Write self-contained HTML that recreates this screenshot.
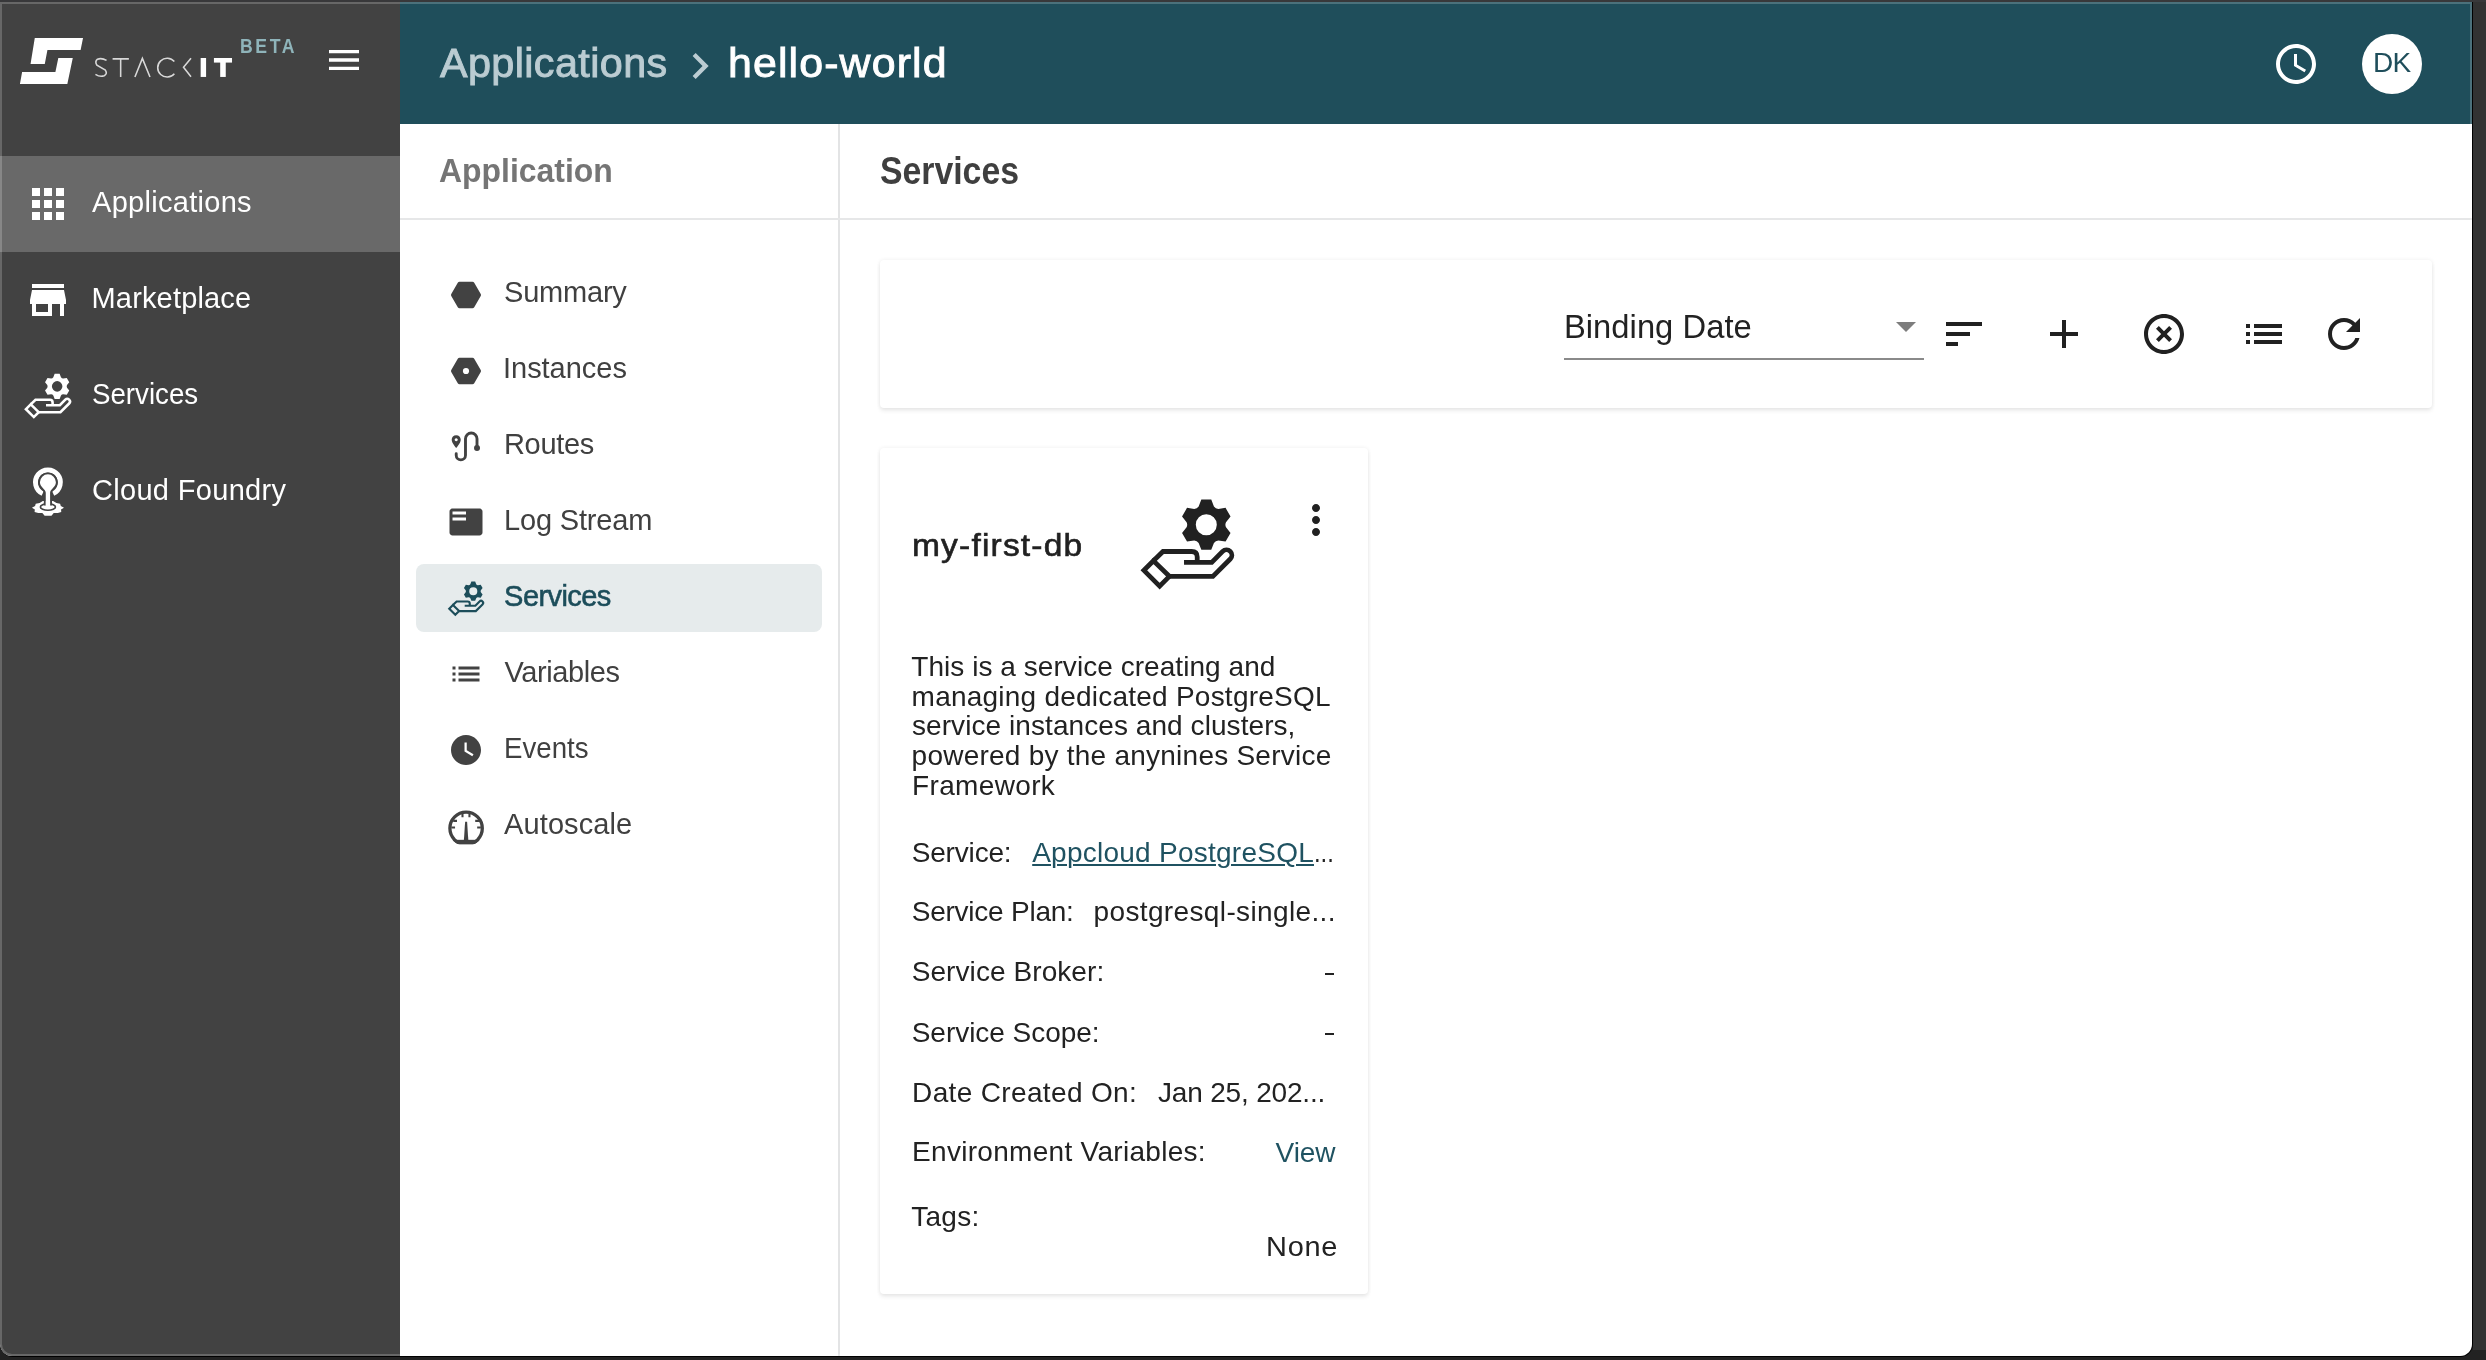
<!DOCTYPE html>
<html>
<head>
<meta charset="utf-8">
<title>hello-world - Services</title>
<style>
*{box-sizing:border-box;margin:0;padding:0}
html,body{width:2486px;height:1360px;overflow:hidden;background:#222}
body{font-family:"Liberation Sans",sans-serif;position:relative;color:#212121}
.abs,.t,svg.i{position:absolute}
.t{white-space:nowrap;line-height:1;transform-origin:0 0}
#rstrip{position:absolute;left:2473px;top:0;width:13px;height:1350px;background:#323232}
#win{position:absolute;left:0;top:0;width:2473px;height:1357px;background:#000;border-radius:0 0 13px 13px;overflow:hidden}
#chrome-top{position:absolute;left:0;top:0;width:2486px;height:2px;background:#38383a}
#app{position:absolute;left:0;top:2px;width:2472px;height:1354px;background:#fff;border-radius:0 0 12px 12px;overflow:hidden}
#side{left:0;top:0;width:400px;height:1354px;background:#424242}
#side .act{left:0;top:154px;width:400px;height:96px;background:#696969}
#hdr{left:400px;top:0;width:2072px;height:122px;background:#1f4e5b}
#nav{left:400px;top:122px;width:440px;height:1232px;background:#fff;border-right:2px solid #e3e4e5}
.hline{left:400px;top:216px;width:2072px;height:2px;background:#e6e7e8}
#nav .sel{left:16px;top:440px;width:406px;height:68px;background:#e6ebec;border-radius:8px}
.card{background:#fff;border-radius:4px;box-shadow:0 3px 4px rgba(0,0,0,.07),0 0 4px rgba(0,0,0,.07)}
</style>
</head>
<body>
<svg width="0" height="0" style="position:absolute">
<defs>
<symbol id="svc" viewBox="0 0 1465 1360">
<path d="M823.0,276.0 L851.0,205.1 L955.0,205.1 L983.0,276.0 Q999.7,300.5 1029.3,302.7 L1104.7,291.5 L1156.7,381.6 L1109.3,441.3 Q1096.4,468.0 1109.3,494.7 L1156.7,554.4 L1104.7,644.5 L1029.3,633.3 Q999.7,635.5 983.0,660.0 L955.0,730.9 L851.0,730.9 L823.0,660.0 Q806.3,635.5 776.7,633.3 L701.3,644.5 L649.3,554.4 L696.7,494.7 Q709.6,468.0 696.7,441.3 L649.3,381.6 L701.3,291.5 L776.7,302.7 Q806.3,300.5 823.0,276.0 Z M793.0,468.0 a110,110 0 1,0 220,0 a110,110 0 1,0 -220,0 Z" fill="currentColor" fill-rule="evenodd"/>
<g fill="none" stroke="currentColor" stroke-linejoin="miter">
<path d="M350,845 L250,945 L415,1110 L517,1008 Z"/>
<path d="M350,845 L450,748 H750 Q808,748 808,806 V850"/>
<path d="M670,862 H960 L1074,747 A56,56 0 0 1 1154,827 L972,1008 H517"/>
</g>
</symbol>
</defs>
</svg>

<div id="win">
<div id="app">

<!-- ============ SIDEBAR ============ -->
<div id="side" class="abs">
  <div class="act abs"></div>
  <!-- logo -->
  <svg class="i" style="left:10px;top:18px" width="300" height="90" viewBox="0 0 2486 746">
    <g fill="#fff">
      <path d="M205,150 H605 L585,248 H310 L288,365 H170 Z"/>
      <path d="M520,315 H400 L376,430 H100 L82,530 H475 Z"/>
    </g>
    <g fill="none" stroke="#d8d8d8" stroke-width="13">
      <path d="M800,335 Q760,312 725,325 Q700,345 720,375 L790,415 Q810,445 780,462 Q745,475 708,450"/>
      <path d="M850,322 H985 M917,322 V472"/>
      <path d="M1035,472 L1097,318 L1160,472"/>
      <path d="M1362,345 A78,78 0 1 0 1362,445"/>
      <path d="M1500,318 L1438,392 L1500,470"/>
    </g>
    <g fill="#fff">
      <rect x="1580" y="315" width="45" height="157"/>
      <rect x="1690" y="315" width="150" height="38"/>
      <rect x="1742" y="315" width="46" height="157"/>
    </g>
  </svg>
  <!-- hamburger -->
  <svg class="i" style="left:324px;top:38px" width="40" height="40" viewBox="0 0 24 24"><path fill="#fff" d="M3 18h18v-2H3v2zm0-5h18v-2H3v2zm0-7v2h18V6H3z"/></svg>

  <!-- Applications -->
  <svg class="i" style="left:24px;top:178px" width="48" height="48" viewBox="0 0 24 24"><path fill="#fff" d="M4 8h4V4H4v4zm6 12h4v-4h-4v4zm-6 0h4v-4H4v4zm0-6h4v-4H4v4zm6 0h4v-4h-4v4zm6-10v4h4V4h-4zm-6 4h4V4h-4v4zm6 6h4v-4h-4v4zm0 6h4v-4h-4v4z"/></svg>
  <!-- Marketplace -->
  <svg class="i" style="left:24px;top:274px" width="48" height="48" viewBox="0 0 24 24"><path fill="#fff" d="M20 4H4v2h16V4zm1 10v-2l-1-5H4l-1 5v2h1v6h10v-6h4v6h2v-6h1zm-9 4H6v-4h6v4z"/></svg>
  <!-- Services -->
  <svg class="i" style="left:14px;top:362px;color:#fff;stroke-width:54" width="70" height="65"><use href="#svc" width="70" height="65"/></svg>
  <!-- Cloud Foundry -->
  <svg class="i" style="left:20px;top:458px" width="56" height="62" viewBox="0 0 1228 1360">
    <path d="M497,737 A272,272 0 1 1 727,737" fill="none" stroke="#fff" stroke-width="110"/>
    <path id="cfbase" fill="#fff" d="M262,1045 L330,1010 L345,960 L430,945 L500,900 H725 L800,945 L880,960 L895,1010 L965,1045 L900,1085 L905,1140 L830,1165 L740,1160 L690,1225 H540 L490,1160 L400,1165 L320,1140 L325,1085 Z"/>
    <ellipse cx="612" cy="1030" rx="165" ry="72" fill="#fff" stroke="#424242" stroke-width="36"/>
    <path d="M565,1000 V720 C565,640 437,600 437,490 A175,175 0 1 1 787,490 C787,600 660,640 660,720 V1000" fill="#fff" stroke="#424242" stroke-width="84" paint-order="stroke"/>
    <rect x="566" y="900" width="93" height="150" fill="#fff"/>
  </svg>
</div>

<!-- ============ HEADER ============ -->
<div id="hdr" class="abs">
  <svg class="i" style="left:274px;top:38px" width="52" height="52" viewBox="0 0 24 24"><path fill="#bbccd2" d="M10 6L8.59 7.41 13.17 12l-4.58 4.59L10 18l6-6z"/></svg>
  <svg class="i" style="left:1872px;top:38px" width="48" height="48" viewBox="0 0 24 24"><path fill="#fff" d="M11.99 2C6.47 2 2 6.48 2 12s4.47 10 9.99 10C17.52 22 22 17.52 22 12S17.52 2 11.99 2zM12 20c-4.42 0-8-3.580-8-8s3.580-8 8-8 8 3.580 8 8-3.580 8-8 8zm.5-13H11v6l5.250 3.150.75-1.230-4.500-2.670z"/></svg>
  <div class="abs" style="left:1962px;top:32px;width:60px;height:60px;border-radius:50%;background:#fff"></div>
</div>

<!-- ============ SECONDARY NAV ============ -->
<div id="nav" class="abs">
  <div class="sel abs"></div>
  <!-- icons -->
  <svg class="i" style="left:48px;top:153px" width="36" height="36" viewBox="0 0 36 36"><path fill="#424242" stroke="#424242" stroke-width="4" stroke-linejoin="round" d="M5,18 L11.500,6.700 H24.500 L31,18 L24.500,29.300 H11.500 Z"/></svg>
  <svg class="i" style="left:48px;top:229px" width="36" height="36" viewBox="0 0 36 36"><path fill="#424242" stroke="#424242" stroke-width="4" stroke-linejoin="round" d="M5,18 L11.500,6.700 H24.500 L31,18 L24.500,29.300 H11.500 Z"/><circle cx="18" cy="18" r="3.100" fill="#fff"/></svg>
  <svg class="i" style="left:36px;top:286px" width="60" height="70" viewBox="0 0 1166 1360">
    <path fill="#424242" fill-rule="evenodd" d="M393,490 C340,490 305,530 305,578 C305,640 393,738 393,738 C393,738 481,640 481,578 C481,530 446,490 393,490 Z M393,548 a30,30 0 1,0 .1,0 Z"/>
    <path fill="none" stroke="#424242" stroke-width="56" stroke-linecap="round" d="M393,848 V880 A90,90 0 0 0 573,880 V560 A112,112 0 0 1 797,560 V720"/>
    <circle cx="797" cy="740" r="58" fill="#424242"/>
  </svg>
  <svg class="i" style="left:48px;top:380px" width="36" height="36" viewBox="0 0 24 24"><path fill="#424242" d="M21 3H3c-1.100 0-2 .9-2 2v14c0 1.100.9 2 2 2h18c1.100 0 2-.9 2-2V5c0-1.100-.9-2-2-2zm-9 8H3V9h9v2zm0-4H3V5h9v2z"/></svg>
  <svg class="i" style="left:40px;top:450px;color:#1c4d5a;stroke-width:58" width="54" height="50"><use href="#svc" width="54" height="50"/></svg>
  <svg class="i" style="left:48px;top:532px" width="36" height="36" viewBox="0 0 24 24"><path fill="#424242" d="M3 13h2v-2H3v2zm0 4h2v-2H3v2zm0-8h2V7H3v2zm4 4h14v-2H7v2zm0 4h14v-2H7v2zM7 7v2h14V7H7z"/></svg>
  <svg class="i" style="left:48px;top:608px" width="36" height="36" viewBox="0 0 24 24"><path fill="#424242" d="M12 2C6.500 2 2 6.500 2 12s4.500 10 10 10 10-4.500 10-10S17.500 2 12 2zm4.200 14.200L11 13V7h1.500v5.200l4.500 2.700-.8 1.300z"/></svg>
  <svg class="i" style="left:36px;top:666px" width="60" height="70" viewBox="0 0 1166 1360">
    <defs><clipPath id="gc1"><rect x="0" y="0" width="1166" height="1052"/></clipPath><clipPath id="gc2"><circle cx="585" cy="745" r="346"/></clipPath></defs>
    <g clip-path="url(#gc1)"><circle cx="585" cy="745" r="315" fill="none" stroke="#424242" stroke-width="64"/></g>
    <g clip-path="url(#gc2)"><rect x="200" y="968" width="800" height="84" fill="#424242"/></g>
    <path fill="#424242" d="M566,618 H604 L628,975 H542 Z"/>
    <g stroke="#424242" stroke-width="40" fill="none">
      <path d="M298,730 H370 M800,730 H872 M335,600 H408 M762,600 H835"/>
      <path d="M515,465 V528 M650,465 V528"/>
    </g>
  </svg>
  <!-- labels -->
</div>

<!-- ============ MAIN ============ -->
<div class="hline abs"></div>

<!-- toolbar card -->
<div class="card abs" style="left:880px;top:258px;width:1552px;height:148px"></div>
<div class="abs" style="left:1564px;top:356px;width:360px;height:2px;background:#8a8a8a"></div>
<svg class="i" style="left:1882px;top:300px" width="48" height="48" viewBox="0 0 24 24"><path fill="#7d7d7d" d="M7 10l5 5 5-5z"/></svg>
<svg class="i" style="left:1940px;top:308px" width="48" height="48" viewBox="0 0 24 24"><path fill="#212121" d="M3 18h6v-2H3v2zM3 6v2h18V6H3zm0 7h12v-2H3v2z"/></svg>
<svg class="i" style="left:2040px;top:308px" width="48" height="48" viewBox="0 0 24 24"><path fill="#212121" d="M19 13h-6v6h-2v-6H5v-2h6V5h2v6h6v2z"/></svg>
<svg class="i" style="left:2140px;top:308px" width="48" height="48" viewBox="0 0 24 24"><path fill="#212121" d="M14.590 8L12 10.590 9.410 8 8 9.410 10.590 12 8 14.590 9.410 16 12 13.410 14.590 16 16 14.590 13.410 12 16 9.410 14.590 8zM12 2C6.470 2 2 6.470 2 12s4.470 10 10 10 10-4.470 10-10S17.530 2 12 2zm0 18c-4.410 0-8-3.590-8-8s3.590-8 8-8 8 3.590 8 8-3.590 8-8 8z"/></svg>
<svg class="i" style="left:2240px;top:308px" width="48" height="48" viewBox="0 0 24 24"><path fill="#212121" d="M3 13h2v-2H3v2zm0 4h2v-2H3v2zm0-8h2V7H3v2zm4 4h14v-2H7v2zm0 4h14v-2H7v2zM7 7v2h14V7H7z"/></svg>
<svg class="i" style="left:2320px;top:308px" width="48" height="48" viewBox="0 0 24 24"><path fill="#212121" d="M17.650 6.350C16.200 4.900 14.210 4 12 4c-4.420 0-7.990 3.580-7.990 8s3.570 8 7.990 8c3.730 0 6.840-2.550 7.730-6h-2.080c-.82 2.330-3.040 4-5.650 4-3.310 0-6-2.690-6-6s2.690-6 6-6c1.660 0 3.140.69 4.220 1.780L13 11h7V4l-2.350 2.350z"/></svg>

<!-- service card -->
<div class="card abs" style="left:880px;top:446px;width:488px;height:846px"></div>
<div class="c">
  <svg class="i" style="left:1120px;top:478px;color:#212121;stroke-width:50" width="140" height="130"><use href="#svc" width="140" height="130"/></svg>
  <svg class="i" style="left:1292px;top:494px" width="48" height="48" viewBox="0 0 24 24"><path fill="#212121" d="M12 8c1.100 0 2-.9 2-2s-.9-2-2-2-2 .9-2 2 .9 2 2 2zm0 2c-1.100 0-2 .9-2 2s.9 2 2 2 2-.9 2-2-.9-2-2-2zm0 6c-1.100 0-2 .9-2 2s.9 2 2 2 2-.9 2-2-.9-2-2-2z"/></svg>
</div>

<div class="abs" style="left:1325px;top:971px;width:9px;height:2px;background:#222"></div>
<div class="abs" style="left:1325px;top:1031px;width:9px;height:2px;background:#222"></div>
<div id="txt" style="position:absolute;left:0;top:0;width:2472px;height:1354px;will-change:transform">
<!--TEXTS-->
<div class="t" id="s1" style="left:92.1px;top:186px;font-size:29px;color:#fff;letter-spacing:0.28px">Applications</div>
<div class="t" id="s2" style="left:91.5px;top:282px;font-size:29px;color:#fff;letter-spacing:0.17px">Marketplace</div>
<div class="t" id="s3" style="left:91.9px;top:378px;font-size:29px;color:#fff;letter-spacing:0.00px;transform:scaleX(0.9550)">Services</div>
<div class="t" id="s4" style="left:91.9px;top:474px;font-size:29px;color:#fff;letter-spacing:0.33px">Cloud Foundry</div>
<div class="t" id="beta" style="left:239.7px;top:33px;font-size:21px;color:#8fb4ba;letter-spacing:3.07px;transform:scaleX(0.8400);font-weight:bold">BETA</div>
<div class="t" id="h1" style="left:440.0px;top:41px;font-size:40.5px;color:#bbccd2;letter-spacing:0.39px;transform:scaleX(1.0202);-webkit-text-stroke:.9px #bbccd2">Applications</div>
<div class="t" id="h2" style="left:727.5px;top:41px;font-size:40.5px;color:#fff;letter-spacing:1.06px;transform:scaleX(1.0586);-webkit-text-stroke:.9px #fff">hello-world</div>
<div class="t" id="dk" style="left:2373.0px;top:47px;font-size:28px;color:#1f4e5b;letter-spacing:-0.60px">DK</div>
<div class="t" id="n0" style="left:438.8px;top:151px;font-size:34px;color:#757575;letter-spacing:0.00px;transform:scaleX(0.9385);font-weight:bold">Application</div>
<div class="t" id="n1" style="left:504.1px;top:276px;font-size:29px;color:#404040;letter-spacing:-0.22px">Summary</div>
<div class="t" id="n2" style="left:503.0px;top:352px;font-size:29px;color:#404040;letter-spacing:-0.03px">Instances</div>
<div class="t" id="n3" style="left:504.0px;top:428px;font-size:29px;color:#404040;letter-spacing:-0.34px">Routes</div>
<div class="t" id="n4" style="left:504.0px;top:504px;font-size:29px;color:#404040;letter-spacing:-0.18px">Log Stream</div>
<div class="t" id="n5" style="left:504.1px;top:580px;font-size:29px;color:#1c4d5a;letter-spacing:-0.56px;-webkit-text-stroke:.6px #1c4d5a">Services</div>
<div class="t" id="n6" style="left:504.4px;top:656px;font-size:29px;color:#404040;letter-spacing:-0.39px">Variables</div>
<div class="t" id="n7" style="left:504.1px;top:732px;font-size:29px;color:#404040;letter-spacing:0.00px;transform:scaleX(0.9535)">Events</div>
<div class="t" id="n8" style="left:504.1px;top:808px;font-size:29px;color:#404040;letter-spacing:0.09px">Autoscale</div>
<div class="t" id="m0" style="left:880.0px;top:149px;font-size:39px;color:#3f3f3f;letter-spacing:0.00px;transform:scaleX(0.8658);font-weight:bold">Services</div>
<div class="t" id="bd" style="left:1563.9px;top:309px;font-size:32.7px;color:#222;letter-spacing:0.06px">Binding Date</div>
<div class="t" id="c0" style="left:911.6px;top:528px;font-size:31px;color:#212121;letter-spacing:1.09px;transform:scaleX(1.0819);-webkit-text-stroke:.6px #212121">my-first-db</div>
<div class="t" id="d1" style="left:911.3px;top:651px;font-size:28px;color:#222;letter-spacing:0.05px">This is a service creating and</div>
<div class="t" id="d2" style="left:911.6px;top:681px;font-size:28px;color:#222;letter-spacing:0.23px">managing dedicated PostgreSQL</div>
<div class="t" id="d3" style="left:912.0px;top:710px;font-size:28px;color:#222;letter-spacing:0.07px">service instances and clusters,</div>
<div class="t" id="d4" style="left:911.6px;top:740px;font-size:28px;color:#222;letter-spacing:0.24px">powered by the anynines Service</div>
<div class="t" id="d5" style="left:912.1px;top:770px;font-size:28px;color:#222;letter-spacing:0.34px">Framework</div>
<div class="t" id="r1" style="left:911.7px;top:837px;font-size:28px;color:#222;letter-spacing:-0.17px">Service:</div>
<div class="t" id="r1v" style="left:1032.2px;top:837px;font-size:28px;color:#1f5261;letter-spacing:0.25px;text-decoration:underline;text-decoration-thickness:2px;text-underline-offset:2px">Appcloud PostgreSQL</div>
<div class="t" id="r1e" style="left:1314.0px;top:837px;font-size:28px;color:#222;letter-spacing:0.00px;transform:scaleX(0.8500)">...</div>
<div class="t" id="r2" style="left:911.7px;top:896px;font-size:28px;color:#222;letter-spacing:-0.23px">Service Plan:</div>
<div class="t" id="r2v" style="left:1093.5px;top:896px;font-size:28px;color:#222;letter-spacing:0.37px">postgresql-single...</div>
<div class="t" id="r3" style="left:911.7px;top:956px;font-size:28px;color:#222;letter-spacing:0.08px">Service Broker:</div>
<div class="t" id="r4" style="left:911.7px;top:1017px;font-size:28px;color:#222;letter-spacing:-0.03px">Service Scope:</div>
<div class="t" id="r5" style="left:912.1px;top:1077px;font-size:28px;color:#222;letter-spacing:0.35px">Date Created On:</div>
<div class="t" id="r5v" style="left:1158.0px;top:1077px;font-size:28px;color:#222;letter-spacing:-0.18px">Jan 25, 202...</div>
<div class="t" id="r6" style="left:912.1px;top:1136px;font-size:28px;color:#222;letter-spacing:0.29px">Environment Variables:</div>
<div class="t" id="r6v" style="left:1275.6px;top:1137px;font-size:28px;color:#1f5261;letter-spacing:-0.07px">View</div>
<div class="t" id="r7" style="left:911.2px;top:1201px;font-size:28px;color:#222;letter-spacing:0.30px">Tags:</div>
<div class="t" id="r7v" style="left:1265.5px;top:1231px;font-size:28px;color:#222;letter-spacing:0.71px;transform:scaleX(1.0344)">None</div>
<!--/TEXTS-->
</div>
</div>
<!-- window edge highlights -->
<div class="abs" style="left:0;top:2px;width:2472px;height:1354px;border:2px solid rgba(255,255,255,.2);border-radius:0 0 12px 12px;pointer-events:none"></div>
</div>
<div id="rstrip"></div>
<div id="chrome-top"></div>
</body>
</html>
